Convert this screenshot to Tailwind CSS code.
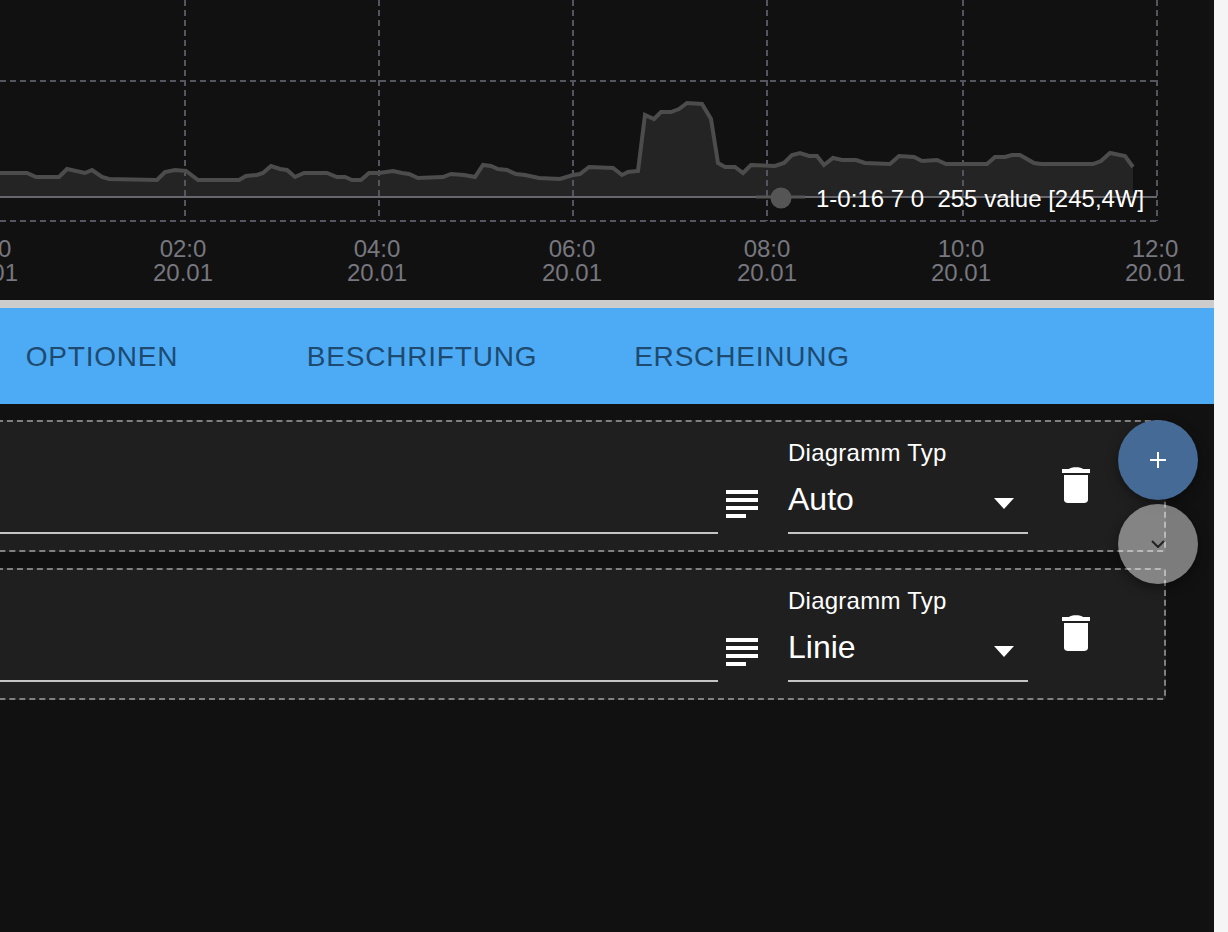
<!DOCTYPE html>
<html lang="de">
<head>
    <meta charset="UTF-8">
    <title>Diagramm</title>
    <script src="https://cdn.jsdelivr.net/npm/@tailwindcss/browser@4"></script>
</head>
<body class="bg-[#f5f5f5] font-['Liberation_Sans',sans-serif]">
<div class="relative w-[1214px] h-[932px] bg-[#111111] overflow-hidden">

    <!-- chart -->
    <svg class="block w-[1214px] h-[300px] bg-[#111111]" width="1214" height="300" viewBox="0 0 1214 300">
        <path d="M0 173L27 173L36 177L59 177L67 169L85 173L92 170L102 177L109 179L157 180L165 172L175 170L186 171L198 180L239 180L246 176L257 175L263 173L271 166L280 169L287 170L295 177L304 173L327 173L337 177L345 177L352 180L361 180L369 173L379 173L393 171L402 173L409 174L418 178L443 177L451 174L464 175L475 177L483 165L491 166L498 169L507 170L516 174L525 175L539 178L560 179L573 175L580 174L589 167L613 168L622 175L628 172L638 171L645 115L654 119L661 112L671 112L679 109L687 103L702 104L711 119L718 163L725 167L735 167L743 173L751 165L775 166L784 163L792 155L800 153L809 156L817 156L824 165L833 158L842 160L856 160L865 163L890 164L899 156L914 157L922 161L937 160L946 164L987 164L995 157L1005 157L1012 155L1020 155L1034 163L1041 164L1093 164L1101 161L1110 153L1125 156L1133 167L1133 197L0 197Z" fill="#242424"/>
        <g stroke="#55555f" stroke-width="2" stroke-dasharray="6 4" fill="none">
            <path d="M185 0V221"/>
            <path d="M379 0V221"/>
            <path d="M573 0V221"/>
            <path d="M767 0V221"/>
            <path d="M963 0V221"/>
            <path d="M1157 0V221"/>
            <path d="M0 81H1157"/>
            <path d="M0 221H1157"/>
        </g>
        <path d="M0 197H1157" stroke="#66666c" stroke-width="2" fill="none"/>
        <polyline points="0,173 27,173 36,177 59,177 67,169 85,173 92,170 102,177 109,179 157,180 165,172 175,170 186,171 198,180 239,180 246,176 257,175 263,173 271,166 280,169 287,170 295,177 304,173 327,173 337,177 345,177 352,180 361,180 369,173 379,173 393,171 402,173 409,174 418,178 443,177 451,174 464,175 475,177 483,165 491,166 498,169 507,170 516,174 525,175 539,178 560,179 573,175 580,174 589,167 613,168 622,175 628,172 638,171 645,115 654,119 661,112 671,112 679,109 687,103 702,104 711,119 718,163 725,167 735,167 743,173 751,165 775,166 784,163 792,155 800,153 809,156 817,156 824,165 833,158 842,160 856,160 865,163 890,164 899,156 914,157 922,161 937,160 946,164 987,164 995,157 1005,157 1012,155 1020,155 1034,163 1041,164 1093,164 1101,161 1110,153 1125,156 1133,167" fill="none" stroke="#4c4c4c" stroke-width="4"/>
        <path d="M756 197H805" stroke="#555555" stroke-width="3"/>
        <circle cx="781" cy="198" r="10.5" fill="#555555"/>
        <text x="816" y="207" font-size="24" fill="#ffffff" xml:space="preserve">1-0:16 7 0  255 value [245,4W]</text>
        <g font-size="24" fill="#77777f" text-anchor="middle">
            <text x="-12" y="257">00:0</text><text x="-12" y="281">20.01</text>
            <text x="183" y="257">02:0</text><text x="183" y="281">20.01</text>
            <text x="377" y="257">04:0</text><text x="377" y="281">20.01</text>
            <text x="572" y="257">06:0</text><text x="572" y="281">20.01</text>
            <text x="767" y="257">08:0</text><text x="767" y="281">20.01</text>
            <text x="961" y="257">10:0</text><text x="961" y="281">20.01</text>
            <text x="1155" y="257">12:0</text><text x="1155" y="281">20.01</text>
        </g>
    </svg>

    <div class="h-2 bg-[#cccccc]"></div>

    <!-- tabs -->
    <div class="h-24 bg-[#4dabf5] flex items-center pl-[2px] pt-[2px] -ml-[60px] w-[1274px] text-[28px] tracking-[0.8px] text-[#1e4a70]">
        <div class="w-[320px] text-center">OPTIONEN</div>
        <div class="w-[320px] text-center">BESCHRIFTUNG</div>
        <div class="w-[320px] text-center">ERSCHEINUNG</div>
    </div>

    <!-- rows -->
    <div class="flex flex-col gap-4 pt-4 pr-12 -ml-4">
        <div class="h-[132px] bg-[#1f1f1f] border-2 border-dashed border-[#808080] rounded-[3px] flex items-start">
            <div class="flex-1 h-[112px] border-b-2 border-[#c4c4c4]"></div>
            <svg class="mt-[68px] ml-2 shrink-0" width="32" height="28" viewBox="0 0 32 28" fill="#ffffff"><path d="M0 0H32V4H0ZM0 8H32V12H0ZM0 16H32V20H0ZM0 24H20V28H0Z"/></svg>
            <div class="relative ml-[30px] w-[240px] h-[112px] border-b-2 border-[#c4c4c4] text-white shrink-0">
                <div class="absolute top-[17px] left-0 text-[24px] leading-[28px] tracking-[0.25px]">Diagramm Typ</div>
                <div class="absolute top-[57px] left-0 text-[32px] leading-[40px]">Auto</div>
                <svg class="absolute left-[206px] top-[76px]" width="20" height="11" viewBox="0 0 20 11" fill="#ffffff"><path d="M0 0H20L10 11Z"/></svg>
            </div>
            <svg class="mt-[44px] ml-[34px] shrink-0" width="28" height="38" viewBox="0 0 28 38" fill="#ffffff"><path d="M0 3H7C9 0.5 19 0.5 21 3H28V7H0ZM2 9H26V34C26 36 24 37 22 37H6C4 37 2 36 2 34Z"/></svg>
            <div class="w-[74px] shrink-0"></div>
        </div>
        <div class="h-[132px] bg-[#1f1f1f] border-2 border-dashed border-[#808080] rounded-[3px] flex items-start">
            <div class="flex-1 h-[112px] border-b-2 border-[#c4c4c4]"></div>
            <svg class="mt-[68px] ml-2 shrink-0" width="32" height="28" viewBox="0 0 32 28" fill="#ffffff"><path d="M0 0H32V4H0ZM0 8H32V12H0ZM0 16H32V20H0ZM0 24H20V28H0Z"/></svg>
            <div class="relative ml-[30px] w-[240px] h-[112px] border-b-2 border-[#c4c4c4] text-white shrink-0">
                <div class="absolute top-[17px] left-0 text-[24px] leading-[28px] tracking-[0.25px]">Diagramm Typ</div>
                <div class="absolute top-[57px] left-0 text-[32px] leading-[40px]">Linie</div>
                <svg class="absolute left-[206px] top-[76px]" width="20" height="11" viewBox="0 0 20 11" fill="#ffffff"><path d="M0 0H20L10 11Z"/></svg>
            </div>
            <svg class="mt-[44px] ml-[34px] shrink-0" width="28" height="38" viewBox="0 0 28 38" fill="#ffffff"><path d="M0 3H7C9 0.5 19 0.5 21 3H28V7H0ZM2 9H26V34C26 36 24 37 22 37H6C4 37 2 36 2 34Z"/></svg>
            <div class="w-[74px] shrink-0"></div>
        </div>
    </div>

    <!-- floating buttons -->
    <div class="absolute left-[1118px] top-[420px] w-20 h-20 rounded-full bg-[#446a95] shadow-[0_4px_12px_rgba(0,0,0,0.4)] flex items-center justify-center">
        <svg width="16" height="16" viewBox="0 0 16 16" stroke="#ffffff" stroke-width="2"><path d="M8 0V16M0 8H16"/></svg>
    </div>
    <div class="absolute left-[1118px] top-[504px] w-20 h-20 rounded-full bg-white/45 shadow-[0_4px_12px_rgba(0,0,0,0.4)] flex items-center justify-center">
        <svg width="14" height="8" viewBox="0 0 14 8" fill="none" stroke="#222222" stroke-width="2"><path d="M1 1L7 7L13 1"/></svg>
    </div>
</div>
</body>
</html>
